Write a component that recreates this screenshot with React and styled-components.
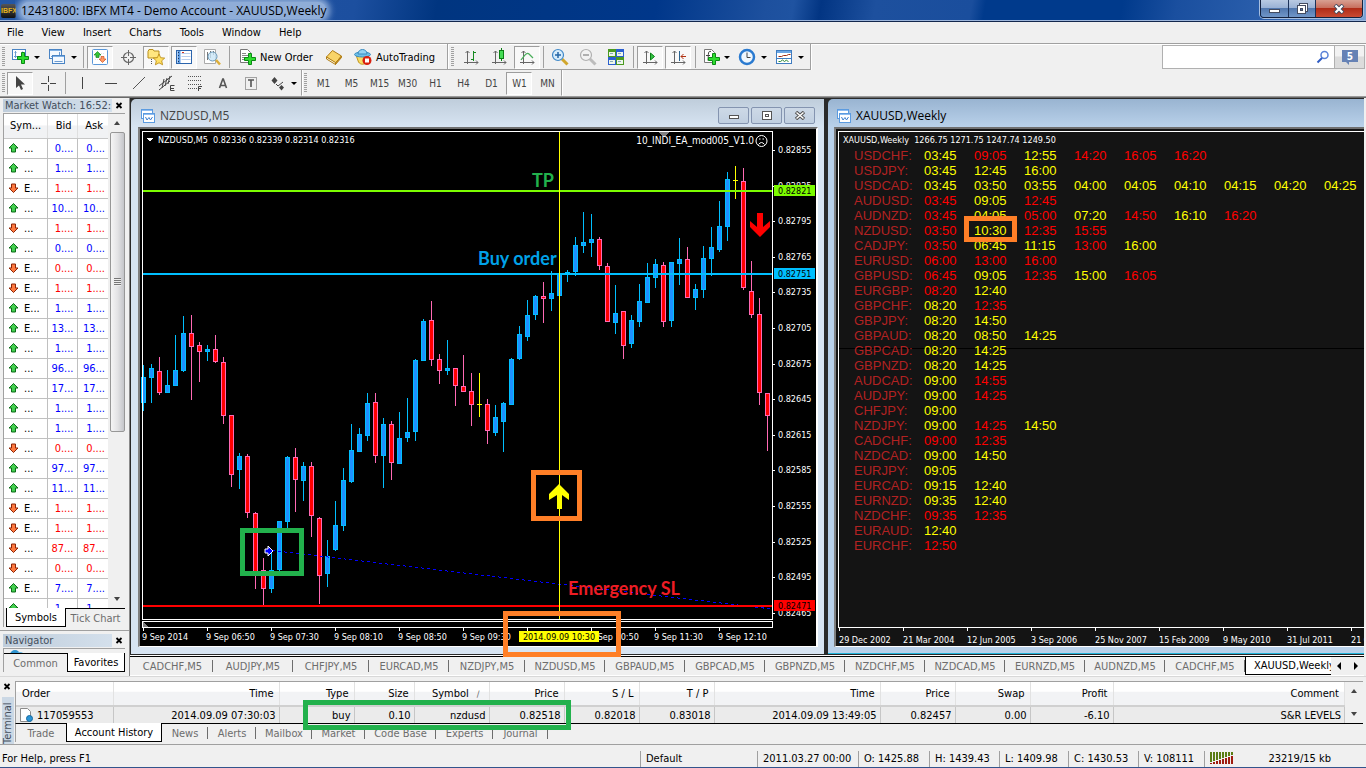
import React from 'react'
import styled, { createGlobalStyle, css } from 'styled-components'

const ui = `"DejaVu Sans Condensed", "Noto Sans", sans-serif`
const segoe = `"Open Sans", "Noto Sans", sans-serif`

const GlobalStyle = createGlobalStyle`
    * { box-sizing: border-box; }
    body {
        margin: 0;
        background: #f0f0f0;
        font-family: ${ui};
        font-size: 11px;
        color: #000;
        overflow-x: hidden;
    }
    button, input { font: inherit; color: inherit; }
    button { border: 0; background: none; padding: 0; }
    ul { list-style: none; margin: 0; padding: 0; }
    svg { display: block; flex: none; }
    h2 { margin: 0; font-weight: 400; }
    a { color: inherit; text-decoration: none; }
`

const Page = styled.div`
    min-height: 100vh;
    display: flex;
    flex-direction: column;
`

/* ---------- title bar + menu ---------- */
const TitleBar = styled.header`
    height: 22px;
    display: flex;
    align-items: flex-start;
    padding-left: 1px;
    border-bottom: 1px solid #14284e;
    box-shadow: inset 0 -1px 0 #9db6dc;
    background: linear-gradient(100deg, #2457a4 0%, #1c4f9f 26%, #003580 32%, #00378a 48%, #1d509e 56%, #1f53a1 58%, #023583 60%, #1d509e 64%, #1a4e9d 71%, #003a8c 72%, #003a8c 82%, #1a4f9f 86%, #2c60ad 93%, #7ba3d6 100%);
`
const Logo = styled.span`
    width: 15px;
    height: 14px;
    margin-top: 4px;
    border-radius: 2px;
    background: linear-gradient(#555, #111);
    color: #e3b221;
    font: bold 7px/14px "Liberation Sans", sans-serif;
    text-align: center;
    overflow: hidden;
`
const AppName = styled.span`
    margin: 2px auto 0 5px;
    border-radius: 8px;
    background: #8fadd8;
    box-shadow: 0 0 6px 4px #8fadd8;
    clip-path: inset(-2px -16px -1px -6px);
    font: 12px/17px ${segoe};
`
const WindowButtons = styled.div`
    display: flex;
    height: 18px;
    margin-right: 3px;
    border: 1px solid #13213e;
    border-top: 0;
    border-radius: 0 0 4px 4px;
    overflow: hidden;
    box-shadow: 0 0 0 1px #a7bfe0;
`
const WindowButton = styled.button`
    width: ${p => p.$close ? 47 : 27}px;
    display: flex;
    align-items: center;
    justify-content: center;
    background: ${p => p.$close
        ? 'linear-gradient(#d8a092 0%, #c8705f 45%, #b02c18 50%, #c94a33 100%)'
        : 'linear-gradient(#b9cae2 0%, #9ab2d5 45%, #5278ae 50%, #7096c8 100%)'};
    & + & { border-left: 1px solid #1c3259; }
`
const Menu = styled.nav`
    height: 22px;
    display: flex;
    align-items: center;
    padding-left: 7px;
    gap: 18px;
    border-bottom: 1px solid #a0a0a0;
    box-shadow: 0 1px 0 #fff;
`

/* ---------- toolbars ---------- */
const Bars = styled.div`
    display: flex;
    align-items: flex-start;
    border-bottom: 1px solid #9a9a9a;
    box-shadow: 0 1px 0 #696969;
    margin-bottom: 1px;
`
const BarRows = styled.div`
    flex: 1;
`
const BarRow = styled.div`
    display: flex;
    height: 26px;
`
const Bar = styled.div`
    display: flex;
    align-items: center;
    padding-top: 1px;
    padding-right: ${p => p.$end || 0}px;
    border-right: 1px solid #a0a0a0;
    border-bottom: 1px solid ${p => p.$last ? 'transparent' : '#a0a0a0'};
    box-shadow: 1px 0 0 #fff;
`
const Grip = styled.i`
    width: ${p => p.$w || 6}px;
    height: 20px;
    background: repeating-linear-gradient(#a0a0a0 0 1px, transparent 1px 2px) center / 3px 100% no-repeat;
`
const Tool = styled.button`
    width: ${p => p.$w || 28}px;
    height: 23px;
    display: flex;
    align-items: center;
    justify-content: center;
    ${p => p.$on && css`
        width: 26px;
        margin: 0 1px;
        border: 1px solid #fff;
        border-top-color: #9d9d9d;
        border-left-color: #9d9d9d;
        background: #f8f8f8;
    `}
`
const TextTool = styled.button`
    display: flex;
    align-items: center;
    gap: 4px;
    height: 23px;
    padding: 0 0 0 6px;
    width: ${p => p.$w}px;
    white-space: nowrap;
`
const Period = styled(Tool)`
    padding-left: 1px;
    font-size: 10px;
    color: #444;
`
const Caret = styled.button`
    width: 9px;
    height: 23px;
    &::before {
        content: '';
        display: block;
        width: 0;
        border: 3px solid transparent;
        border-top-color: #000;
        border-bottom: 0;
    }
`
const Split = styled.i`
    width: ${p => p.$w || 6}px;
    height: 22px;
    background: linear-gradient(#a0a0a0, #a0a0a0) center / 1px 100% no-repeat;
`
const Search = styled.label`
    display: flex;
    align-items: center;
    width: 173px;
    height: 24px;
    margin-top: 1px;
    padding-right: 4px;
    background: #fff;
    border: 1px solid #b0b0b0;
    input { flex: 1; min-width: 0; border: 0; outline: 0; background: none; }
`
const News = styled.button`
    width: 30px;
    height: 24px;
    margin: 1px 1px 0 0;
    display: flex;
    align-items: center;
    justify-content: center;
    border: 1px solid #b0b0b0;
    border-left: 0;
    background: linear-gradient(#f2f2f2 45%, #dcdcdc 50%);
`

/* ---------- left docks ---------- */
const Main = styled.main`
    display: flex;
`
const Side = styled.aside`
    width: 130px;
    flex: none;
    border-right: 1px solid #8a8a8a;
    padding-left: 3px;
`
const DockTitle = styled.div`
    display: flex;
    align-items: center;
    justify-content: space-between;
    height: 15px;
    padding-right: 5px;
    h2 {
        width: 109px;
        height: 13px;
        padding-left: 2px;
        font-size: 11px;
        line-height: 13px;
        white-space: nowrap;
        overflow: hidden;
        color: #434e5c;
        background: linear-gradient(90deg, #bfcddb, #d4e0ec);
    }
`
const WatchBody = styled.div`
    display: flex;
    height: 495px;
    overflow: hidden;
    border-top: 1px solid #a0a0a0;
    border-left: 1px solid #a0a0a0;
    margin-right: 4px;
`
const WatchTable = styled.table`
    width: 104px;
    table-layout: fixed;
    border-collapse: collapse;
    background: #fff;
    flex: none;
    align-self: flex-start;
    th {
        height: 24px;
        padding: 0 5px 0 6px;
        font-weight: 400;
        text-align: right;
        border-right: 1px solid #dfdfdf;
        border-bottom: 1px solid #c8c8c8;
        background: linear-gradient(#fff 45%, #f1f2f4 50%);
    }
    th:first-child { text-align: left; }
    td {
        height: 20px;
        padding: 0 3px 0 0;
        text-align: right;
        border-right: 1px solid #c0c0c0;
        border-bottom: 1px solid #c0c0c0;
    }
    td:first-child { padding-left: 4px; }
    td:last-child, th:last-child { border-right: 0; }
`
const WatchRow = styled.tr`
    color: ${p => p.$up ? '#0000ff' : '#ff0000'};
`
const Symbol = styled.span`
    display: flex;
    align-items: center;
    gap: 5px;
    color: #000;
`
const ScrollBar = styled.div`
    width: 16px;
    flex: none;
    display: flex;
    flex-direction: column;
    align-items: center;
    justify-content: space-between;
    padding: 5px 0;
    margin-left: 1px;
    background: #f0f0f0;
`
const Thumb = styled.div`
    width: 15px;
    height: 300px;
    margin: 5px 0 auto;
    display: flex;
    align-items: center;
    justify-content: center;
    border: 1px solid #979797;
    border-radius: 2px;
    background: linear-gradient(90deg, #f5f5f5, #e3e3e5 50%, #c4c5c9);
    &::before {
        content: '';
        width: 7px;
        height: 8px;
        background: repeating-linear-gradient(#777 0 1px, #eee 1px 2px);
    }
`
const DockTabs = styled.div`
    display: flex;
    margin: 0 4px ${p => p.$gap}px 0;
    padding-left: ${p => p.$indent || 0}px;
    height: 19px;
    border-left: 1px solid #a0a0a0;
`
const DockTab = styled.button`
    flex: ${p => p.$w ? 'none' : 1};
    width: ${p => p.$w || 0}px;
    height: 19px;
    white-space: nowrap;
    color: #6d6d6d;
    border-top: 1px solid #000;
    ${p => p.$on && css`
        color: #000;
        background: #fff;
        border: 1px solid #000;
        border-top: 0;
    `}
`
const Navigator = styled.section`
    border-top: 1px solid #a0a0a0;
    margin-left: -3px;
    padding: 2px 0 0 3px;
    height: 46px;
`
const NavBody = styled.div`
    height: 5px;
    margin-right: 4px;
    padding-left: 6px;
    overflow: hidden;
    border-top: 1px solid #a0a0a0;
    border-left: 1px solid #a0a0a0;
`

/* ---------- chart windows ---------- */
const Workspace = styled.section`
    flex: 1;
    min-width: 0;
    margin-right: 2px;
    position: relative;
`
const Desktop = styled.div`
    display: flex;
    gap: 4px;
    padding: 1px 0 1px 1px;
    background: #2a2a2a;
    border-bottom: 1px solid #fff;
`
const ChartWindow = styled.article`
    flex: ${p => p.$grow ? 1 : 'none'};
    min-width: 0;
    padding: 0 ${p => p.$grow ? 0 : 6}px 7px ${p => p.$grow ? 6 : 7}px;
    border-radius: 5px 0 0 0;
    background: ${p => p.$grow
        ? 'linear-gradient(#99b4d1, #b9d1ea 28px)'
        : 'linear-gradient(#bfcddb, #d7e4f2 28px)'};
    box-shadow: ${p => p.$grow ? 'inset 0 -1px 0 #1fb5dc' : 'none'};
`
const ChartTitle = styled.div`
    display: flex;
    align-items: center;
    height: 28px;
    padding: 5px 3px 0 3px;
    gap: 5px;
    h2 {
        flex: 1;
        font: 12px/16px ${segoe};
        color: ${p => p.$on ? '#000' : '#444'};
    }
`
const ChildButtons = styled.div`
    display: flex;
    gap: 2px;
`
const ChildButton = styled.button`
    width: 31px;
    height: 17px;
    display: flex;
    align-items: center;
    justify-content: center;
    border: 1px solid #8494b0;
    border-radius: 2px;
    background: linear-gradient(#cdd9e7, #c0cfe0);
`
const Sunken = styled.div`
    position: relative;
    border: 2px solid #fff;
    border-top-color: #707070;
    border-left-color: #808080;
    border-bottom-width: 1px;
    ${p => p.$cut && 'border-right: 0;'}
`
const Levels = styled.div`
    position: relative;
    height: 517px;
    padding: 2px 0 0 2px;
    background: #141414;
    color: #fff;
    overflow: hidden;
`
const LevelsArea = styled.div`
    height: 497px;
    padding: 2px 0 0 4px;
    border: 1px solid #fff;
    border-right: 0;
    background: linear-gradient(#000, #000) 0 216px / 100% 1px no-repeat;
`
const Quote = styled.div`
    height: 14px;
    font-size: 9px;
    line-height: 13px;
    white-space: pre;
`
const Times = styled.table`
    margin-left: 11px;
    border-collapse: collapse;
    font: 13px/15px "Liberation Sans", Arial, sans-serif;
    th { width: 70px; min-width: 70px; padding: 0; text-align: left; font-weight: 400; color: #b22222; }
    td { width: 50px; min-width: 50px; height: 15px; padding: 0; }
`
const Time = styled.td`
    color: ${p => p.$red ? '#ff0000' : '#ffff00'};
`
const Dates = styled.ul`
    display: flex;
    margin-top: -1px;
    padding-left: 1px;
    li {
        flex: none;
        width: 64px;
        font-size: 9px;
        line-height: 18px;
        white-space: nowrap;
    }
    li::before {
        content: '';
        display: block;
        width: 1px;
        height: 4px;
        background: #fff;
    }
`
const Mark = styled.div`
    position: absolute;
    left: ${p => p.$x}px;
    top: ${p => p.$y}px;
    width: ${p => p.$w}px;
    height: ${p => p.$h}px;
    border: 5px solid ${p => p.$color || '#ff7f27'};
    pointer-events: none;
`
const ChartTabs = styled.nav`
    display: flex;
    height: 20px;
    padding-right: 1px;
    border-top: 1px solid #000;
    border-bottom: 1px solid #fff;
`
const TabStrip = styled.div`
    flex: 1;
    min-width: 0;
    display: flex;
    padding-left: 2px;
    overflow: hidden;
`
const ChartTab = styled.button`
    flex: none;
    width: ${p => p.$w || 80}px;
    height: 18px;
    display: flex;
    align-items: center;
    justify-content: center;
    color: #6d6d6d;
    background: linear-gradient(#6d6d6d, #6d6d6d) right center / 1px 12px no-repeat;
    ${p => p.$on && css`
        justify-content: flex-start;
        padding-left: 8px;
        color: #000;
        background: #fff;
        border-left: 1px solid #000;
        border-bottom: 1px solid #000;
    `}
`
const Arrow = styled.button`
    width: 16px;
    display: flex;
    align-items: center;
    justify-content: center;
`

/* ---------- terminal ---------- */
const Terminal = styled.section`
    position: relative;
    display: flex;
    height: 69px;
    padding-top: 4px;
    border-top: 1px solid #d8d8d8;
    border-bottom: 1px solid #a0a0a0;
`
const TerminalSide = styled.div`
    width: 15px;
    display: flex;
    flex-direction: column;
    align-items: center;
    gap: 6px;
    padding-top: 1px;
    h2 {
        width: 12px;
        height: 47px;
        font-size: 11px;
        line-height: 12px;
        writing-mode: vertical-rl;
        transform: rotate(180deg);
        color: #434e5c;
        background: #cbd8e5;
    }
`
const TerminalBody = styled.div`
    flex: 1;
    min-width: 0;
    margin-right: 3px;
`
const History = styled.div`
    display: flex;
    height: 43px;
    border-top: 1px solid #a0a0a0;
    border-left: 1px solid #a0a0a0;
    border-bottom: 1px solid #000;
`
const Orders = styled.table`
    flex: 1;
    min-width: 0;
    table-layout: fixed;
    border-collapse: collapse;
    th, td {
        padding: 0 5px 0 6px;
        font-weight: 400;
        text-align: right;
        white-space: nowrap;
    }
    th {
        height: 24px;
        border-right: 1px solid #e2e2e2;
        border-bottom: 2px solid #d0d0d0;
        background: linear-gradient(#fff 40%, #f2f3f5 45%);
    }
    td { height: 17px; padding-right: 3px; background: #ebebeb; border-right: 1px solid #c6c6c6; }
    th:first-child, td:first-child { text-align: left; }
    td:first-child { padding-left: 3px; }
`
const Col = styled.col`
    width: ${p => p.$w ? p.$w + 'px' : 'auto'};
`
const OrderNo = styled.span`
    display: flex;
    align-items: center;
    gap: 4px;
`
const SortHint = styled.span`
    margin: 0 4px 0 8px;
    font-size: 9px;
    color: #666;
`
const Scroller = styled.div`
    width: 18px;
    display: flex;
    flex-direction: column;
    align-items: center;
    justify-content: space-between;
    padding: 5px 0 5px;
`
const TerminalTabs = styled.div`
    display: flex;
    height: 18px;
    border-left: 1px solid #a0a0a0;
`
const TerminalTab = styled.button`
    width: ${p => p.$w}px;
    height: 18px;
    color: #6d6d6d;
    background: ${p => p.$plain ? 'none' : 'linear-gradient(#6d6d6d, #6d6d6d) right center / 1px 12px no-repeat'};
    ${p => p.$on && css`
        margin-top: -1px;
        height: 19px;
        color: #000;
        background: #fff;
        border: 1px solid #000;
        border-top: 0;
    `}
`

/* ---------- status bar ---------- */
const Status = styled.footer`
    display: flex;
    align-items: flex-end;
    height: 23px;
    border-bottom: 1px solid #33548c;
`
const StatusCell = styled.span`
    flex: ${p => p.$w ? 'none' : 1};
    width: ${p => p.$w || 0}px;
    height: 16px;
    padding-left: ${p => p.$first ? 2 : 5}px;
    line-height: 16px;
    white-space: nowrap;
    border-left: ${p => p.$first ? 0 : 1}px solid #a0a0a0;
`
const Traffic = styled(StatusCell)`
    display: flex;
    justify-content: space-between;
    padding-right: 35px;
`

/* ---------- icons ---------- */
const Svg = ({ w = 18, h = 18, children }) => (
    <svg width={w} height={h} viewBox={`0 0 ${w} ${h}`} fill="none" aria-hidden="true">{children}</svg>
)
const Plus = ({ x, y }) => (
    <path d={`M${x + 4} ${y}h3v4h4v3h-4v4h-3v-4h-4v-3h4z`} fill="#2fdc2f" stroke="#0a8a14" />
)
const Axes = () => (
    <path d="M5.500 16V3M2 14.500h14M3.500 5l2-2 2 2M14 12.500l2 2-2 2" stroke="#666" />
)
const NewChartIcon = () => (
    <Svg>
        <rect x="1.500" y="1.500" width="13" height="10" fill="#fff" stroke="#4a84c4" />
        <path d="M4.500 3v7M3 8.500h9M11.500 3.500v4M3.500 4.500l1-1 1 1" stroke="#6b9bd0" />
        <Plus x={6.5} y={4.5} />
    </Svg>
)
const ProfilesIcon = () => (
    <Svg>
        <rect x="1.500" y="1.500" width="12" height="9" fill="#f4f9ff" stroke="#4a84c4" />
        <path d="M2 2.500h11" stroke="#7fb0e4" />
        <path d="M3 8.500h4M11.500 4v3" stroke="#6b9bd0" />
        <rect x="4.500" y="7.500" width="12" height="8" fill="#f4f9ff" stroke="#4a84c4" />
        <path d="M5 8.500h11" stroke="#7fb0e4" />
        <path d="M6.500 13.500h8" stroke="#6b9bd0" />
    </Svg>
)
const WatchIcon = () => (
    <Svg>
        <rect x="1.500" y="1.500" width="15" height="15" rx="1" fill="#fff" stroke="#5a97d8" />
        <path d="M4 5.500h10M4 8.500h10M4 11.500h10" stroke="#e0e4ea" strokeDasharray="1 1" />
        <path d="M6.500 3.500l3.500 3.500h-2v2.500h-3v-2.500h-2z" fill="#35c435" stroke="#087a14" strokeWidth=".6" />
        <path d="M11.500 14.500l3.500-3.500h-2v-2.500h-3v2.500h-2z" fill="#ff9a64" stroke="#c8400c" strokeWidth=".6" />
    </Svg>
)
const CrosshairIcon = () => (
    <Svg>
        <circle cx="9.500" cy="9.500" r="5" stroke="#666" strokeWidth="1.200" />
        <path d="M9.500 2v6M9.500 11v6M2 9.500h6M11 9.500h6" stroke="#666" />
    </Svg>
)
const FavIcon = () => (
    <Svg>
        <path d="M1 3.500l1-2h4l1 1.500h5v7h-11z" fill="#ffe680" stroke="#b98f1c" />
        <path d="M4.500 11v5M2.500 13.500" stroke="#555" strokeDasharray="1 1" />
        <path d="M12 6l1.700 3.700 4 .4-3 2.700.9 4-3.600-2-3.600 2 .9-4-3-2.700 4-.4z" fill="#ffe064" stroke="#b8860b" strokeWidth=".8" />
    </Svg>
)
const DataIcon = () => (
    <Svg>
        <rect x="1.500" y="2.500" width="15" height="13" fill="#fff" stroke="#2b64ac" />
        <path d="M4 3v12" stroke="#5c9be2" strokeWidth="3" />
        <path d="M6.500 5.500h9M6.500 8.500h9M6.500 11.500h9" stroke="#b8cdec" />
        <path d="M3.500 4v10" stroke="#16325c" strokeDasharray="1 2" />
        <path d="M7 4.500h2" stroke="#d03020" />
    </Svg>
)
const TesterIcon = () => (
    <Svg>
        <path d="M1.500 1.500h11v14h-11z" fill="#fff" stroke="#aaa" />
        <path d="M4.500 4v8M7.500 3v7M10.500 3v4" stroke="#777" />
        <circle cx="9.500" cy="8.500" r="4.500" fill="#c9e6f8" fillOpacity=".8" stroke="#6a98b8" />
        <path d="M13 12l4 4.500" stroke="#dcae3a" strokeWidth="2.500" />
    </Svg>
)
const OrderIcon = ({ fx }) => (
    <Svg>
        <path d="M2.500 1.500h7l3 3v10h-10z" fill="#fff" stroke="#777" />
        {fx
            ? <path d="M9 3.500c-3-1-2.500 2-3 9M4 7.500h4" stroke="#444" />
            : <path d="M4 5.500h4M4 7.500h6M4 9.500h4M4 11.500h3" stroke="#888" />}
        <Plus x={6.5} y={5.5} />
    </Svg>
)
const EditorIcon = () => (
    <Svg>
        <path d="M1.500 9l6-6.500L16.500 8l-6 7z" fill="#f9d468" stroke="#b07c14" />
        <path d="M1.500 9v2l9 5.500v-2z" fill="#fff6d8" stroke="#b07c14" />
        <path d="M10.500 16.500l6-7V8l-6 7z" fill="#d69b28" stroke="#b07c14" />
    </Svg>
)
const AutoIcon = () => (
    <Svg>
        <path d="M2 7l2.500 7c2 3 6 3 8 0l2.500-7z" fill="#f8dc66" stroke="#c09418" />
        <ellipse cx="8.500" cy="6.500" rx="8" ry="2.500" fill="#6fc0e8" stroke="#3a8cc0" />
        <path d="M4 6c0-6 9-6 9 0z" fill="#93d2f2" stroke="#3a8cc0" />
        <circle cx="13" cy="12.500" r="4.500" fill="#d9200e" />
        <rect x="11" y="10.500" width="4" height="4" fill="#fff" />
    </Svg>
)
const BarsIcon = () => (
    <Svg><Axes /><path d="M11.500 3v10M9 11.500h3M11 4.500h3" stroke="#158a20" /></Svg>
)
const CandlesIcon = () => (
    <Svg>
        <Axes />
        <path d="M11.500 0v13" stroke="#0a7f14" />
        <rect x="9.500" y="2.500" width="4" height="8" fill="#45dc55" stroke="#0a7f14" />
    </Svg>
)
const LineIcon = () => (
    <Svg><Axes /><path d="M3 12c4-5 6-8 8-6l4 4" stroke="#4aae5a" strokeWidth="1.200" /></Svg>
)
const ZoomIcon = ({ out }) => (
    <Svg>
        <path d="M11 11l5.500 5.500" stroke={out ? '#bcbcbc' : '#d0a62c'} strokeWidth="3" />
        <circle cx="7" cy="7" r="5.500" fill={out ? '#f2f2f2' : '#d6ecfb'} stroke={out ? '#b0b0b0' : '#3f88c8'} strokeWidth="1.200" />
        <path d={out ? 'M4 7h6' : 'M4 7h6M7 4v6'} stroke={out ? '#999' : '#2466a8'} strokeWidth="1.500" />
    </Svg>
)
const TileIcon = () => (
    <Svg>
        <path d="M1 1h8v8H1zM9 9h8v8H9z" fill="#4a9a20" />
        <path d="M9 1h8v8H9zM1 9h8v8H1z" fill="#2b5fd0" />
        <path d="M2 4h6v4H2zM10 4h6v4h-6zM2 12h6v4H2zM10 12h6v4h-6z" fill="#eef6ea" />
        <path d="M3 5.500h3M11 5.500h3M3 13.500h3M11 13.500h3" stroke="#8ab" />
    </Svg>
)
const ScrollIcon = () => (
    <Svg><Axes /><path d="M9.500 5l4 3.500-4 3.500z" fill="#35c445" stroke="#0a7f14" /></Svg>
)
const ShiftIcon = () => (
    <Svg><Axes /><path d="M10.500 3v10" stroke="#2a6390" /><path d="M17 8.500h-5M14.500 6L12 8.500l2.500 2.500" stroke="#b03010" /></Svg>
)
const ClockIcon = () => (
    <Svg>
        <circle cx="9" cy="9" r="7" fill="#f0f7fd" stroke="#2a7ad0" strokeWidth="2.500" />
        <path d="M9 4.500V9.500h3.500" stroke="#444" />
    </Svg>
)
const TemplateIcon = () => (
    <Svg>
        <rect x="1.500" y="2.500" width="15" height="13" fill="#fff" stroke="#3f7cc0" />
        <path d="M2 4h14" stroke="#6aa6e4" strokeWidth="2" />
        <path d="M3.500 8.500h3l2-1h3l2-1h2" stroke="#9c2a12" />
        <path d="M2 10.500h14" stroke="#3f7cc0" />
        <path d="M3.500 13.500h2l2-1.500 2 1.500 2-1.500 2 2" stroke="#2d8a34" />
    </Svg>
)
const CursorIcon = () => (
    <Svg><path d="M5 2v12l3-2.500 2 4.500 2-1-2-4.500h4z" fill="#444" /></Svg>
)
const CrossIcon = () => (
    <Svg><path d="M9.500 2v6M9.500 11v6M2 9.500h6M11 9.500h6" stroke="#444" /></Svg>
)
const VLineIcon = () => <Svg><path d="M8.500 3v12" stroke="#444" /></Svg>
const HLineIcon = () => <Svg><path d="M3 9.500h12" stroke="#444" /></Svg>
const TrendIcon = () => <Svg><path d="M3 15L15 3" stroke="#555" /></Svg>
const ChannelIcon = () => (
    <Svg>
        <path d="M1 12L14 2M1 16L12 7M4 14l2-9M7 12l2-8M10 10l2-8" stroke="#444" />
        <path d="M16.500 11.500h-4v5h4M13 14.500h3" stroke="#444" />
    </Svg>
)
const FiboIcon = () => (
    <Svg>
        <path d="M2 2.500h14M2 6.500h14M2 10.500h14M2 14.500h9" stroke="#555" strokeDasharray="1 1" />
        <path d="M16 12.500h-3.500V17M12.500 14.500H15" stroke="#444" />
    </Svg>
)
const AIcon = () => <Svg><path d="M5.500 14L8.800 5h.5L12.500 14M6.500 11.500h5" stroke="#555" strokeWidth="1.600" /></Svg>
const LabelIcon = () => (
    <Svg>
        <rect x="3.500" y="3.500" width="11" height="12" stroke="#555" strokeDasharray="1 1" />
        <path d="M6 6h6M9 6v7" stroke="#555" strokeWidth="1.600" />
    </Svg>
)
const ArrowsIcon = () => (
    <Svg>
        <path d="M2.500 6.500l3-3.500 3 3.500-3 3.500zM10 13.500l2.500-2.500 2.500 2.500-2.500 3z" fill="#444" />
        <path d="M7 10l2 2M9 12l5-4" stroke="#444" />
    </Svg>
)
const FindIcon = () => (
    <Svg w={14} h={14}>
        <circle cx="8.500" cy="5" r="3.500" stroke="#5a82d8" strokeWidth="1.500" />
        <path d="M6 8l-4.500 4.500" stroke="#2f5cc4" strokeWidth="2" />
    </Svg>
)
const BubbleIcon = () => (
    <svg width="16" height="16" viewBox="0 0 16 16" aria-hidden="true">
        <path d="M0 1h16v12H7v3l-3-3H0z" fill="#6682b5" />
        <text x="8" y="11" textAnchor="middle" fill="#fff" fontSize="10" fontWeight="700">5</text>
    </svg>
)
const ChartIcon = () => (
    <Svg w={14} h={14}>
        <rect x=".5" y=".5" width="11" height="9" fill="#fff" stroke="#5b9be0" />
        <path d="M1 1.500h10" stroke="#8fbcf0" />
        <path d="M2 6l2-2 1 2" stroke="#5b9be0" />
        <rect x="2.500" y="4.500" width="11" height="9" fill="#fff" stroke="#5b9be0" />
        <path d="M3 5.500h10" stroke="#8fbcf0" />
        <path d="M4.500 8l1.500 3L8 8.500 9.500 11 11.500 8" stroke="#3d7fd0" />
    </Svg>
)
const Tri = ({ d, fill = '#000' }) => <Svg w={8} h={8}><path d={d} fill={fill} /></Svg>
const CloseX = () => <Svg w={9} h={9}><path d="M1.500 2l5 5M6.500 2l-5 5" stroke="#000" strokeWidth="1.800" /></Svg>
const Direction = ({ up }) => (
    <Svg w={11} h={10}>
        {up
            ? <path d="M5.500.5l4.500 4.500H7.500v4h-4V5H1z" fill="#45d050" stroke="#0b6b17" />
            : <path d="M5.500 9.500L10 5H7.500V1h-4v4H1z" fill="#ff7a40" stroke="#8c2506" />}
    </Svg>
)
const PageIcon = () => (
    <Svg w={14} h={14}>
        <path d="M1.500.5h7l3 3v10h-10z" fill="#fff" stroke="#8a8a8a" />
        <circle cx="10.500" cy="10.500" r="3" fill="#2a94d6" stroke="#16699e" />
    </Svg>
)

/* ---------- data ---------- */
// direction, symbol, price
const watch = [
    [1, '...', '0....'], [1, '...', '1....'], [0, 'E...', '1....'], [1, '...', '10...'],
    [0, '...', '1....'], [1, '...', '0....'], [0, 'E...', '0....'], [0, 'E...', '1....'],
    [1, 'E...', '1....'], [1, 'E...', '13...'], [1, '...', '1....'], [1, '...', '96...'],
    [1, '...', '17...'], [1, '...', '1....'], [1, '...', '1....'], [0, '...', '0....'],
    [1, '...', '97...'], [1, '...', '11...'], [0, 'E...', '1....'], [0, 'E...', '1....'],
    [0, '...', '87...'], [0, '...', '0....'], [1, 'E...', '7....'], [1, '...', '1....'],
]

// kind (u = up, d = down, n = flat), high, body top, body bottom, low
const candles = [
    ['u', 365, 377, 403, 411], ['u', 364, 368, 378, 403], ['d', 357, 371, 393, 395],
    ['u', 370, 385, 393, 393], ['u', 335, 370, 386, 386], ['u', 316, 333, 371, 372],
    ['d', 315, 333, 347, 400], ['d', 342, 345, 352, 382], ['u', 345, 349, 352, 361],
    ['d', 335, 349, 362, 363], ['d', 357, 362, 416, 424], ['d', 415, 415, 475, 487],
    ['u', 453, 456, 470, 489], ['d', 454, 456, 513, 518], ['d', 512, 513, 572, 589],
    ['d', 558, 570, 589, 605], ['u', 550, 570, 589, 593], ['u', 521, 521, 570, 572],
    ['u', 456, 457, 522, 529], ['d', 448, 457, 480, 512], ['u', 462, 466, 481, 501],
    ['d', 462, 466, 516, 537], ['d', 517, 518, 576, 604], ['u', 540, 556, 574, 587],
    ['u', 501, 525, 550, 551], ['u', 468, 480, 526, 531], ['u', 424, 450, 482, 483],
    ['u', 428, 434, 452, 452], ['u', 393, 403, 436, 441], ['d', 393, 402, 456, 463],
    ['u', 418, 424, 456, 488], ['d', 421, 424, 463, 480], ['u', 412, 438, 464, 464],
    ['u', 398, 432, 438, 442], ['u', 359, 360, 432, 441], ['u', 319, 321, 361, 361],
    ['d', 301, 320, 360, 366], ['d', 354, 359, 371, 384], ['u', 340, 368, 371, 375],
    ['d', 368, 368, 386, 406], ['d', 355, 386, 392, 392], ['d', 373, 391, 405, 426],
    ['n', 373, 404, 405, 417], ['d', 399, 404, 431, 444], ['u', 405, 417, 433, 436],
    ['u', 402, 403, 422, 452], ['u', 358, 359, 405, 405], ['u', 326, 334, 359, 360],
    ['u', 300, 315, 337, 341], ['u', 295, 296, 315, 320], ['d', 282, 296, 299, 323],
    ['u', 271, 293, 299, 311], ['u', 274, 274, 296, 296], ['u', 270, 272, 274, 282],
    ['u', 237, 245, 272, 276], ['u', 212, 242, 246, 253], ['u', 214, 239, 243, 257],
    ['d', 237, 239, 266, 270], ['d', 263, 266, 322, 322], ['u', 285, 313, 323, 334],
    ['d', 311, 311, 346, 359], ['u', 315, 320, 344, 348], ['u', 284, 301, 322, 327],
    ['u', 263, 277, 303, 303], ['u', 259, 264, 278, 288], ['d', 262, 265, 322, 327],
    ['u', 262, 262, 321, 327], ['u', 238, 259, 264, 285], ['d', 247, 259, 298, 298],
    ['u', 284, 289, 298, 310], ['u', 246, 258, 290, 298], ['u', 227, 247, 259, 276],
    ['u', 201, 226, 250, 252], ['u', 172, 179, 227, 241], ['n', 166, 180, 181, 199],
    ['d', 168, 181, 288, 290], ['d', 261, 291, 315, 318], ['d', 298, 314, 393, 405],
    ['d', 393, 393, 416, 451],
]
const palette = {
    u: ['#1e90ff', '#00bfff'],
    d: ['#ff0000', '#ff69b4'],
    n: ['#ffff00', '#ffff00'],
}
const prices = ['855', '825', '795', '765', '735', '705', '675', '645', '615', '585', '555', '525', '495', '465']
const hours = ['2014', '06:50', '07:30', '08:10', '08:50', '09:30', '', '10:50', '11:30', '12:10']

// a leading "r" marks a sell signal
const signals = [
    'USDCHF 03:45 r09:05 12:55 r14:20 r16:05 r16:20',
    'USDJPY 03:45 12:45 16:00',
    'USDCAD 03:45 03:50 03:55 04:00 04:05 04:10 04:15 04:20 04:25',
    'AUDUSD r03:45 09:05 r12:45',
    'AUDNZD r03:45 04:05 r05:00 07:20 r14:50 16:10 r16:20',
    'NZDUSD r03:50 10:30 r12:35 r15:55',
    'CADJPY r03:50 06:45 11:15 r13:00 16:00',
    'EURUSD r06:00 r13:00 r16:00',
    'GBPUSD r06:45 09:05 r12:35 15:00 r16:05',
    'EURGBP r08:20 12:40',
    'GBPCHF 08:20 r12:35',
    'GBPJPY 08:20 14:50',
    'GBPAUD 08:20 08:50 14:25',
    'GBPCAD 08:20 14:25',
    'GBPNZD 08:20 14:25',
    'AUDCAD 09:00 r14:55',
    'AUDJPY 09:00 r14:25',
    'CHFJPY 09:00',
    'NZDJPY 09:00 r14:25 14:50',
    'CADCHF r09:00 r12:35',
    'NZDCAD 09:00 14:50',
    'EURJPY 09:05',
    'EURCAD 09:15 12:40',
    'EURNZD 09:35 12:40',
    'NZDCHF r09:35 r12:35',
    'EURAUD 12:40',
    'EURCHF r12:50',
].map(line => line.split(' '))
const dates = ['29 Dec 2002', '21 Mar 2004', '12 Jun 2005', '3 Sep 2006', '25 Nov 2007', '15 Feb 2009', '9 May 2010', '31 Jul 2011', '21 Oct 2012']

const chartTabs = [
    ['CADCHF', 81], ['AUDJPY', 80], ['CHFJPY', 76], ['EURCAD', 80], ['NZDJPY', 76], ['NZDUSD'], ['GBPAUD'],
    ['GBPCAD'], ['GBPNZD'], ['NZDCHF'], ['NZDCAD'], ['EURNZD'], ['AUDNZD'], ['CADCHF'],
]
const columns = [
    ['Order', 97, '117059553'], ['Time', 166, '2014.09.09 07:30:03'], ['Type', 75, 'buy'], ['Size', 60, '0.10'],
    ['Symbol', 75, 'nzdusd'], ['Price', 75, '0.82518'], ['S / L', 75, '0.82018'], ['T / P', 75, '0.83018'],
    ['Time', 166, '2014.09.09 13:49:05'], ['Price', 75, '0.82457'], ['Swap', 75, '0.00'], ['Profit', 83, '-6.10'],
    ['Comment', 0, 'S&R LEVELS'],
]
const terminalTabs = [
    ['Trade', 50], ['Account History', 96], ['News', 46], ['Alerts', 48], ['Mailbox', 56], ['Market', 53],
    ['Code Base', 71], ['Experts', 57], ['Journal', 55],
]

function NzdChart() {
    return (
        <svg width="676" height="517" viewBox="140 129 676 517" shapeRendering="crispEdges" fontFamily={ui} fontSize="9">
            <rect x="140" y="129" width="676" height="517" fill="#000" />
            {candles.map(([kind, high, top, bottom, low], i) => {
                const x = 143 + i * 8
                const [fill, line] = palette[kind]
                return (
                    <g key={i}>
                        <rect x={x} y={high} width="1" height={low - high} fill={line} />
                        <rect x={x - 2} y={top} width="5" height={bottom - top} fill={line} />
                        <rect x={x - 1} y={top + 1} width="3" height={Math.max(bottom - top - 2, 0)} fill={fill} />
                    </g>
                )
            })}
            <path d="M272 550.500L772 609" stroke="#0000ff" strokeDasharray="3 3" />
            <rect x="143" y="190" width="629" height="2" fill="#7cfc00" />
            <rect x="143" y="273" width="629" height="2" fill="#00bfff" />
            <rect x="143" y="605" width="629" height="2" fill="#ff0000" />
            <rect x="559" y="132" width="1" height="487" fill="#ffff00" />

            <path d="M142.500 619.500v-488h630v488zM142.500 627.500v-6h630v6z" stroke="#fff" fill="none" />
            <path d="M143 622v5h5zM658 132h11l-5 5z" fill="#808080" />
            <path d="M146 137.500h8l-4 4z" fill="#fff" />
            <text x="158" y="143" fill="#fff" xmlSpace="preserve">NZDUSD,M5  0.82336 0.82339 0.82314 0.82316</text>
            <text x="754" y="144" fill="#fff" fontSize="10" textAnchor="end">10_INDI_EA_mod005_V1.0</text>
            <g stroke="#fff" fill="none" shapeRendering="auto">
                <circle cx="761.500" cy="141" r="5.500" />
                <path d="M758.500 144.500q3-4 6 0M759 139h1.500M762.500 139h1.500" />
            </g>

            {prices.map((p, i) => {
                const y = Math.round(150 + i * 35.6)
                return (
                    <g key={p} fill="#fff">
                        <rect x="772" y={y} width="3" height="1" />
                        <text x="778" y={y + 3}>0.82{p}</text>
                    </g>
                )
            })}
            {[[190, '#7cfc00', '821'], [273, '#00bfff', '751'], [605, '#ff0000', '471']].map(([y, fill, p]) => (
                <g key={p}>
                    <rect x="774" y={y - 5} width="41" height="11" fill={fill} />
                    <text x="778" y={y + 4} fill="#000">0.82{p}</text>
                </g>
            ))}
            {hours.map((h, i) => (
                <g key={i} fill="#fff">
                    <rect x={143 + i * 64} y="628" width="1" height="3" />
                    {h && <text x={142 + i * 64} y="640">9 Sep {h}</text>}
                </g>
            ))}
            <rect x="519" y="631" width="80" height="11" fill="#ffff00" />
            <text x="559" y="640" fill="#000" textAnchor="middle">2014.09.09 10:30</text>

            <g shapeRendering="auto">
                <path d="M265 549h3v-3l5 5-5 5v-3h-3z" fill="#0000ff" stroke="#fff" />
                <path d="M549 500v-6l10-10 10 10v6l-7-5v14h-5v-14z" fill="#ffff00" />
                <path d="M750 221v6l10 10 10-10v-6l-7 6v-14h-6v14z" fill="#ff0000" />
            </g>
            <g fontFamily="Lato, sans-serif" fontWeight="700" fontSize="18">
                <text x="532" y="187" fill="#22b14c">TP</text>
                <text x="478" y="265" fill="#00a2e8">Buy order</text>
                <text x="568" y="595" fill="#ed1c24">Emergency SL</text>
            </g>
            <rect x="242.500" y="530.500" width="59" height="43" fill="none" stroke="#22b14c" strokeWidth="5" />
            <rect x="533.500" y="472.500" width="46" height="46" fill="none" stroke="#ff7f27" strokeWidth="5" />
        </svg>
    )
}

function Toolbars() {
    return (
        <Bars>
            <BarRows>
                <BarRow>
                    <Bar>
                        <Grip />
                        <Tool><NewChartIcon /></Tool><Caret />
                        <Tool><ProfilesIcon /></Tool><Caret />
                        <Split />
                        <Tool $on><WatchIcon /></Tool>
                        <Tool><CrosshairIcon /></Tool>
                        <Tool $on><FavIcon /></Tool>
                        <Tool $on><DataIcon /></Tool>
                        <Tool><TesterIcon /></Tool>
                        <Split />
                        <TextTool $w={88}><OrderIcon />New Order</TextTool>
                        <Tool><EditorIcon /></Tool>
                        <TextTool $w={99}><AutoIcon />AutoTrading</TextTool>
                    </Bar>
                    <Bar $end={3}>
                        <Grip $w={9} />
                        <Tool><BarsIcon /></Tool>
                        <Tool><CandlesIcon /></Tool>
                        <Tool $on><LineIcon /></Tool>
                        <Split $w={5} />
                        <Tool><ZoomIcon /></Tool>
                        <Tool><ZoomIcon out /></Tool>
                        <Tool><TileIcon /></Tool>
                        <Split />
                        <Tool $on><ScrollIcon /></Tool>
                        <Tool $on><ShiftIcon /></Tool>
                        <Split />
                        <Tool $w={26}><OrderIcon fx /></Tool><Caret />
                        <Tool><ClockIcon /></Tool><Caret />
                        <Tool><TemplateIcon /></Tool><Caret />
                    </Bar>
                </BarRow>
                <BarRow>
                    <Bar $last $end={1}>
                        <Grip />
                        <Tool $on><CursorIcon /></Tool>
                        <Tool><CrossIcon /></Tool>
                        <Split $w={7} />
                        <Tool><VLineIcon /></Tool>
                        <Tool><HLineIcon /></Tool>
                        <Tool><TrendIcon /></Tool>
                        <Tool><ChannelIcon /></Tool>
                        <Tool><FiboIcon /></Tool>
                        <Tool><AIcon /></Tool>
                        <Tool><LabelIcon /></Tool>
                        <Tool $w={26}><ArrowsIcon /></Tool><Caret />
                    </Bar>
                    <Bar $last>
                        <Grip $w={7} />
                        {['M1', 'M5', 'M15', 'M30', 'H1', 'H4', 'D1', 'W1', 'MN'].map(p => (
                            <Period key={p} $on={p === 'W1'}>{p}</Period>
                        ))}
                    </Bar>
                </BarRow>
            </BarRows>
            <Search>
                <input type="text" aria-label="Search" />
                <FindIcon />
            </Search>
            <News aria-label="5 messages"><BubbleIcon /></News>
        </Bars>
    )
}

function SideDocks() {
    return (
        <Side>
            <DockTitle><h2>Market Watch: 16:52:</h2><CloseX /></DockTitle>
            <WatchBody>
                <WatchTable>
                    <colgroup><Col $w={43} /><Col $w={30} /><Col $w={31} /></colgroup>
                    <thead><tr><th>Sym...</th><th>Bid</th><th>Ask</th></tr></thead>
                    <tbody>
                        {watch.map(([up, name, price], i) => (
                            <WatchRow key={i} $up={up}>
                                <td><Symbol><Direction up={up} />{name}</Symbol></td>
                                <td>{price}</td>
                                <td>{price}</td>
                            </WatchRow>
                        ))}
                    </tbody>
                </WatchTable>
                <ScrollBar>
                    <Tri d="M1 6l3-4 3 4z" fill="#444" />
                    <Thumb />
                    <Tri d="M1 2l3 4 3-4z" fill="#444" />
                </ScrollBar>
            </WatchBody>
            <DockTabs $gap={3} $indent={2}>
                <DockTab $on $w={60}>Symbols</DockTab>
                <DockTab>Tick Chart</DockTab>
            </DockTabs>
            <Navigator>
                <DockTitle><h2>Navigator</h2><CloseX /></DockTitle>
                <NavBody>
                    <Svg w={14} h={6}><circle cx="5" cy="6" r="5" fill="#2f94d0" /><circle cx="10" cy="7" r="4" fill="#62b4e2" /></Svg>
                </NavBody>
                <DockTabs $gap={0}>
                    <DockTab $w={63}>Common</DockTab>
                    <DockTab $on>Favorites</DockTab>
                </DockTabs>
            </Navigator>
        </Side>
    )
}

function Charts() {
    return (
        <Workspace>
            <Desktop>
                <ChartWindow>
                    <ChartTitle>
                        <ChartIcon />
                        <h2>NZDUSD,M5</h2>
                        <ChildButtons>
                            <ChildButton aria-label="Minimize"><Svg w={12} h={9}><rect x="1.500" y="4.500" width="9" height="3" fill="#fff" stroke="#555" /></Svg></ChildButton>
                            <ChildButton aria-label="Maximize"><Svg w={12} h={9}><rect x="1.500" y=".5" width="9" height="8" fill="#fff" stroke="#555" /><rect x="4.500" y="3.500" width="3" height="2" stroke="#555" /></Svg></ChildButton>
                            <ChildButton aria-label="Close"><Svg w={12} h={9}><path d="M2 1l8 7M10 1L2 8" stroke="#555" strokeWidth="3.500" /><path d="M2.500 1.500l7 6M9.500 1.500l-7 6" stroke="#fff" strokeWidth="1.500" /></Svg></ChildButton>
                        </ChildButtons>
                    </ChartTitle>
                    <Sunken><NzdChart /></Sunken>
                </ChartWindow>
                <ChartWindow $grow>
                    <ChartTitle $on>
                        <ChartIcon />
                        <h2>XAUUSD,Weekly</h2>
                    </ChartTitle>
                    <Sunken $cut>
                        <Levels>
                            <LevelsArea>
                                <Quote>XAUUSD,Weekly  1266.75 1271.75 1247.74 1249.50</Quote>
                                <Times>
                                    <tbody>
                                        {signals.map(([name, ...times]) => (
                                            <tr key={name}>
                                                <th scope="row">{name}:</th>
                                                {times.map(t => (
                                                    <Time key={t} $red={t[0] === 'r'}>{t.replace('r', '')}</Time>
                                                ))}
                                            </tr>
                                        ))}
                                    </tbody>
                                </Times>
                            </LevelsArea>
                            <Dates>{dates.map(d => <li key={d}>{d}</li>)}</Dates>
                            <Mark $x={128} $y={87} $w={53} $h={26} />
                        </Levels>
                    </Sunken>
                </ChartWindow>
            </Desktop>
            <ChartTabs>
                <TabStrip>
                    {chartTabs.map(([name, w], i) => <ChartTab key={i} $w={w}>{name},M5</ChartTab>)}
                    <ChartTab $on $w={100}>XAUUSD,Weekly</ChartTab>
                </TabStrip>
                <Arrow aria-label="Previous"><Tri d="M6 0v8L2 4z" /></Arrow>
                <Arrow aria-label="Next"><Tri d="M3 0v8l4-4z" /></Arrow>
            </ChartTabs>
            <Mark $x={373} $y={513} $w={118} $h={46} />
        </Workspace>
    )
}

function TerminalPanel() {
    return (
        <Terminal>
            <TerminalSide><CloseX /><h2>Terminal</h2></TerminalSide>
            <TerminalBody>
                <History>
                    <Orders>
                        <colgroup>{columns.map(([, w], i) => <Col key={i} $w={w} />)}</colgroup>
                        <thead>
                            <tr>
                                {columns.map(([name], i) => (
                                    <th key={i}>{name}{name === 'Symbol' && <SortHint>∕</SortHint>}</th>
                                ))}
                            </tr>
                        </thead>
                        <tbody>
                            <tr>
                                {columns.map(([, , value], i) => (
                                    <td key={i}>{i === 0 ? <OrderNo><PageIcon />{value}</OrderNo> : value}</td>
                                ))}
                            </tr>
                        </tbody>
                    </Orders>
                    <Scroller><Tri d="M1 6l3-4 3 4z" fill="#444" /><Tri d="M1 2l3 4 3-4z" fill="#444" /></Scroller>
                </History>
                <TerminalTabs>
                    {terminalTabs.map(([name, w], i) => (
                        <TerminalTab key={name} $w={w} $on={i === 1} $plain={i === 0}>{name}</TerminalTab>
                    ))}
                </TerminalTabs>
            </TerminalBody>
            <Mark $x={303} $y={23} $w={268} $h={30} $color="#22b14c" />
        </Terminal>
    )
}

function App() {
    return (
        <Page>
            <GlobalStyle />
            <TitleBar>
                <Logo>IBFX</Logo>
                <AppName>12431800: IBFX MT4 - Demo Account - XAUUSD,Weekly</AppName>
                <WindowButtons>
                    <WindowButton aria-label="Minimize"><Svg w={13} h={10}><rect x="1.500" y="5.500" width="10" height="3" fill="#fff" stroke="#444c60" /></Svg></WindowButton>
                    <WindowButton aria-label="Restore"><Svg w={13} h={12}><rect x="3.500" y=".5" width="8" height="8" fill="#fff" stroke="#444c60" /><rect x="1.500" y="2.500" width="8" height="8" fill="#fff" stroke="#444c60" /><rect x="4.500" y="5.500" width="2" height="2" fill="#5278ae" stroke="#444c60" /></Svg></WindowButton>
                    <WindowButton $close aria-label="Close"><Svg w={12} h={10}><path d="M2 1l8 8M10 1L2 9" stroke="#444c60" strokeWidth="4" /><path d="M2.500 1.500l7 7M9.500 1.500l-7 7" stroke="#fff" strokeWidth="2.200" /></Svg></WindowButton>
                </WindowButtons>
            </TitleBar>
            <Menu>
                {['File', 'View', 'Insert', 'Charts', 'Tools', 'Window', 'Help'].map(m => <a key={m} href={`#${m}`}>{m}</a>)}
            </Menu>
            <Toolbars />
            <Main>
                <SideDocks />
                <Charts />
            </Main>
            <TerminalPanel />
            <Status>
                <StatusCell $first>For Help, press F1</StatusCell>
                <StatusCell $w={117}>Default</StatusCell>
                <StatusCell $w={101}>2011.03.27 00:00</StatusCell>
                <StatusCell $w={71}>O: 1425.88</StatusCell>
                <StatusCell $w={70}>H: 1439.43</StatusCell>
                <StatusCell $w={69}>L: 1409.98</StatusCell>
                <StatusCell $w={70}>C: 1430.53</StatusCell>
                <StatusCell $w={66}>V: 108111</StatusCell>
                <Traffic $w={162}>
                    <Svg w={24} h={14}>
                        {[0, 1, 2, 3, 4, 5, 6, 7].map(i => (
                            <g key={i}>
                                <rect x={i * 3} y="1" width="2" height={10 - i} fill="#5a7d14" />
                                <rect x={i * 3} y={12 - i} width="2" height={1 + i} fill="#a01c10" />
                            </g>
                        ))}
                    </Svg>
                    23219/15 kb
                </Traffic>
            </Status>
        </Page>
    )
}

export default App
